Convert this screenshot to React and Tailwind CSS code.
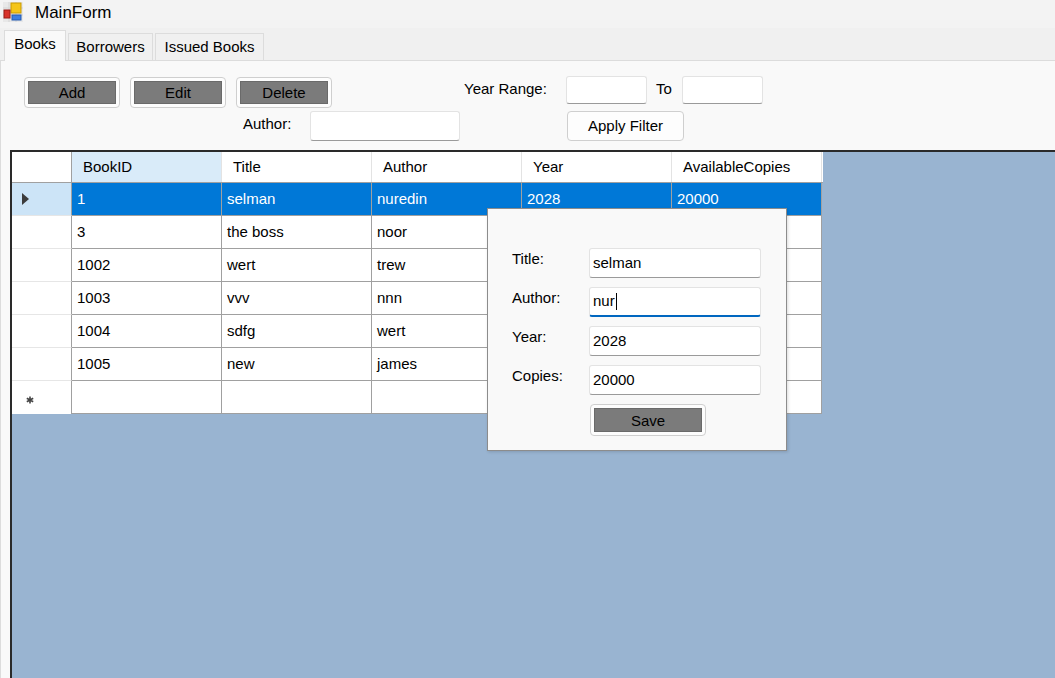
import React from "react";

const font = { fontFamily: '"Liberation Sans", Arial, sans-serif' };

function AppIcon() {
  return (
    <svg width="22" height="22" viewBox="0 0 22 22">
      <rect x="1" y="1" width="20" height="20" fill="#e8e8e8" />
      <path d="M1 7h20M1 14h20M7 1v20M14 1v20" stroke="#d4d4d4" strokeWidth="1" />
      <rect x="9" y="2" width="10" height="10" fill="#f5c518" stroke="#c99a00" strokeWidth="1" />
      <rect x="2" y="9" width="6" height="8" fill="#d8322a" stroke="#9a1b15" strokeWidth="1" />
      <rect x="10" y="14" width="9" height="5" fill="#3d7fe0" stroke="#245bb0" strokeWidth="1" />
    </svg>
  );
}

function GrayButton({ label, w, h = 31 }) {
  return (
    <div
      className="flex items-center justify-center rounded-[4px] border border-[#cfcfcf] bg-[#fdfdfd] p-[3px]"
      style={{ width: w, height: h }}
    >
      <div className="flex h-full w-full items-center justify-center border border-[#6a6a6a] bg-[#7b7b7b] pt-[2px] text-[15px] text-black">
        {label}
      </div>
    </div>
  );
}

function TextBox({ w, h, value, focused, caret }) {
  return (
    <div
      className={
        "flex items-center rounded-[3px] border border-[#e3e3e3] bg-white pl-[3px] text-[15px] text-black " +
        (focused ? "border-b-2 border-b-[#0067c0]" : "border-b-[#9a9a9a]")
      }
      style={{ width: w, height: h }}
    >
      {value}
      {caret && <span className="ml-[1px] inline-block h-[17px] w-[1px] bg-black" />}
    </div>
  );
}

const cols = ["BookID", "Title", "Author", "Year", "AvailableCopies"];
const rows = [
  ["1", "selman", "nuredin", "2028", "20000"],
  ["3", "the boss", "noor", "", ""],
  ["1002", "wert", "trew", "", ""],
  ["1003", "vvv", "nnn", "", ""],
  ["1004", "sdfg", "wert", "", ""],
  ["1005", "new", "james", "", ""],
];

export default function App() {
  return (
    <div className="relative h-[678px] w-[1055px] overflow-hidden bg-[#f3f3f3] text-black" style={font}>
      {/* Title bar */}
      <div className="flex h-[28px] items-center gap-[11px] pb-[4px] pl-[2px]">
        <AppIcon />
        <span className="text-[17px] leading-none">MainForm</span>
      </div>

      {/* Tab strip */}
      <div className="flex h-[32px] items-end gap-[2px] bg-[#f0f0f0] pl-[4px]">
        <div className="relative z-10 -mb-[1px] flex h-[31px] w-[62px] items-center justify-center border border-b-0 border-[#dcdcdc] bg-[#f9f9f9] pb-[3px] text-[15px]">
          Books
        </div>
        <div className="flex h-[27px] w-[85px] items-center justify-center border border-b-0 border-[#dcdcdc] bg-[#f0f0f0] text-[15px]">
          Borrowers
        </div>
        <div className="flex h-[27px] w-[109px] items-center justify-center border border-b-0 border-[#dcdcdc] bg-[#f0f0f0] text-[15px]">
          Issued Books
        </div>
      </div>

      {/* Tab page */}
      <div className="flex h-[618px] flex-col border-t border-l border-[#dcdcdc] bg-[#f9f9f9]">
        {/* Toolbar */}
        <div className="flex h-[89px] flex-col pt-[15px]">
          <div className="flex h-[33px] items-start">
            <div className="ml-[23px] mt-[1px] flex gap-[10px]">
              <GrayButton label="Add" w={96} />
              <GrayButton label="Edit" w={96} />
              <GrayButton label="Delete" w={96} />
            </div>
            <div className="ml-[132px] flex h-[28px] w-[102px] items-center pb-[2px] text-[15px]">Year Range:</div>
            <TextBox w={81} h={28} value="" />
            <div className="flex h-[28px] w-[35px] items-center pb-[2px] pl-[9px] text-[15px]">To</div>
            <TextBox w={81} h={28} value="" />
          </div>
          <div className="mt-[2px] flex h-[30px] items-start">
            <div className="ml-[242px] flex h-[26px] w-[67px] items-center text-[15px]">Author:</div>
            <TextBox w={150} h={30} value="" />
            <div className="ml-[107px]">
              <div className="flex h-[30px] w-[117px] items-center justify-center rounded-[4px] border border-[#cfcfcf] bg-[#fdfdfd] text-[15px]">
                Apply Filter
              </div>
            </div>
          </div>
        </div>

        {/* Grid */}
        <div className="ml-[9px] flex-1 border-t-2 border-l-2 border-t-[#2a2a2a] border-l-[#2a2a2a] bg-[#99b4d1]">
          <div className="flex h-[31px] w-[811px] border-b border-[#a0a0a0] bg-white">
            <div className="h-full w-[60px] border-r border-[#a0a0a0]" />
            {cols.map((c, i) => (
              <div
                key={c}
                className={
                  "flex h-full w-[150px] items-center border-r border-[#e3e3e3] pl-[11px] text-[15px] " +
                  (i === 0 ? "bg-[#d9ebf9]" : "bg-white")
                }
              >
                {c}
              </div>
            ))}
          </div>
          {rows.map((r, ri) => {
            const sel = ri === 0;
            return (
              <div key={ri} className="flex h-[33px] w-[811px]">
                <div
                  className={
                    "flex h-full w-[60px] items-center border-r border-b border-r-[#a0a0a0] border-b-[#e6e6e6] pl-[10px] " +
                    (sel ? "bg-[#cce4f7]" : "bg-white")
                  }
                >
                  {sel && (
                    <svg width="8" height="12" viewBox="0 0 8 12">
                      <polygon points="0,0 7,6 0,12" fill="#3c3c3c" />
                    </svg>
                  )}
                </div>
                {r.map((v, ci) => (
                  <div
                    key={ci}
                    className={
                      "flex h-full w-[150px] items-center border-r border-b border-[#a0a0a0] pl-[5px] pt-[1px] text-[15px] " +
                      (sel ? "bg-[#0078d7] text-white" : "bg-white text-black")
                    }
                  >
                    {v}
                  </div>
                ))}
              </div>
            );
          })}
          <div className="flex h-[33px] w-[811px]">
            <div className="flex h-full w-[60px] items-center border-r border-[#a0a0a0] bg-white pl-[14px] pt-[4px]">
              <svg width="8" height="8" viewBox="0 0 8 8">
                <path d="M4 0.5v7M0.8 2.2l6.4 3.6M0.8 5.8l6.4-3.6" stroke="#444" strokeWidth="1.6" />
              </svg>
            </div>
            {cols.map((c) => (
              <div key={c} className="h-full w-[150px] border-r border-b border-[#a0a0a0] bg-white" />
            ))}
          </div>
        </div>
      </div>

      {/* Popup edit form */}
      <div className="absolute left-[487px] top-[208px] flex h-[243px] w-[300px] flex-col border border-[#8c8c8c] bg-[#f9f9f9] shadow-[1px_1px_3px_rgba(0,0,0,0.15)]">
        <div className="mt-[39px] flex flex-col gap-[9px]">
          {[
            ["Title:", "selman", false],
            ["Author:", "nur", true],
            ["Year:", "2028", false],
            ["Copies:", "20000", false],
          ].map(([l, v, f]) => (
            <div key={l} className="flex h-[30px] items-start">
              <div className="flex h-[22px] w-[101px] items-center pl-[24px] text-[15px]">{l}</div>
              <TextBox w={172} h={30} value={v} focused={f} caret={f} />
            </div>
          ))}
        </div>
        <div className="ml-[102px] mt-[9px]">
          <GrayButton label="Save" w={116} h={32} />
        </div>
      </div>
    </div>
  );
}
